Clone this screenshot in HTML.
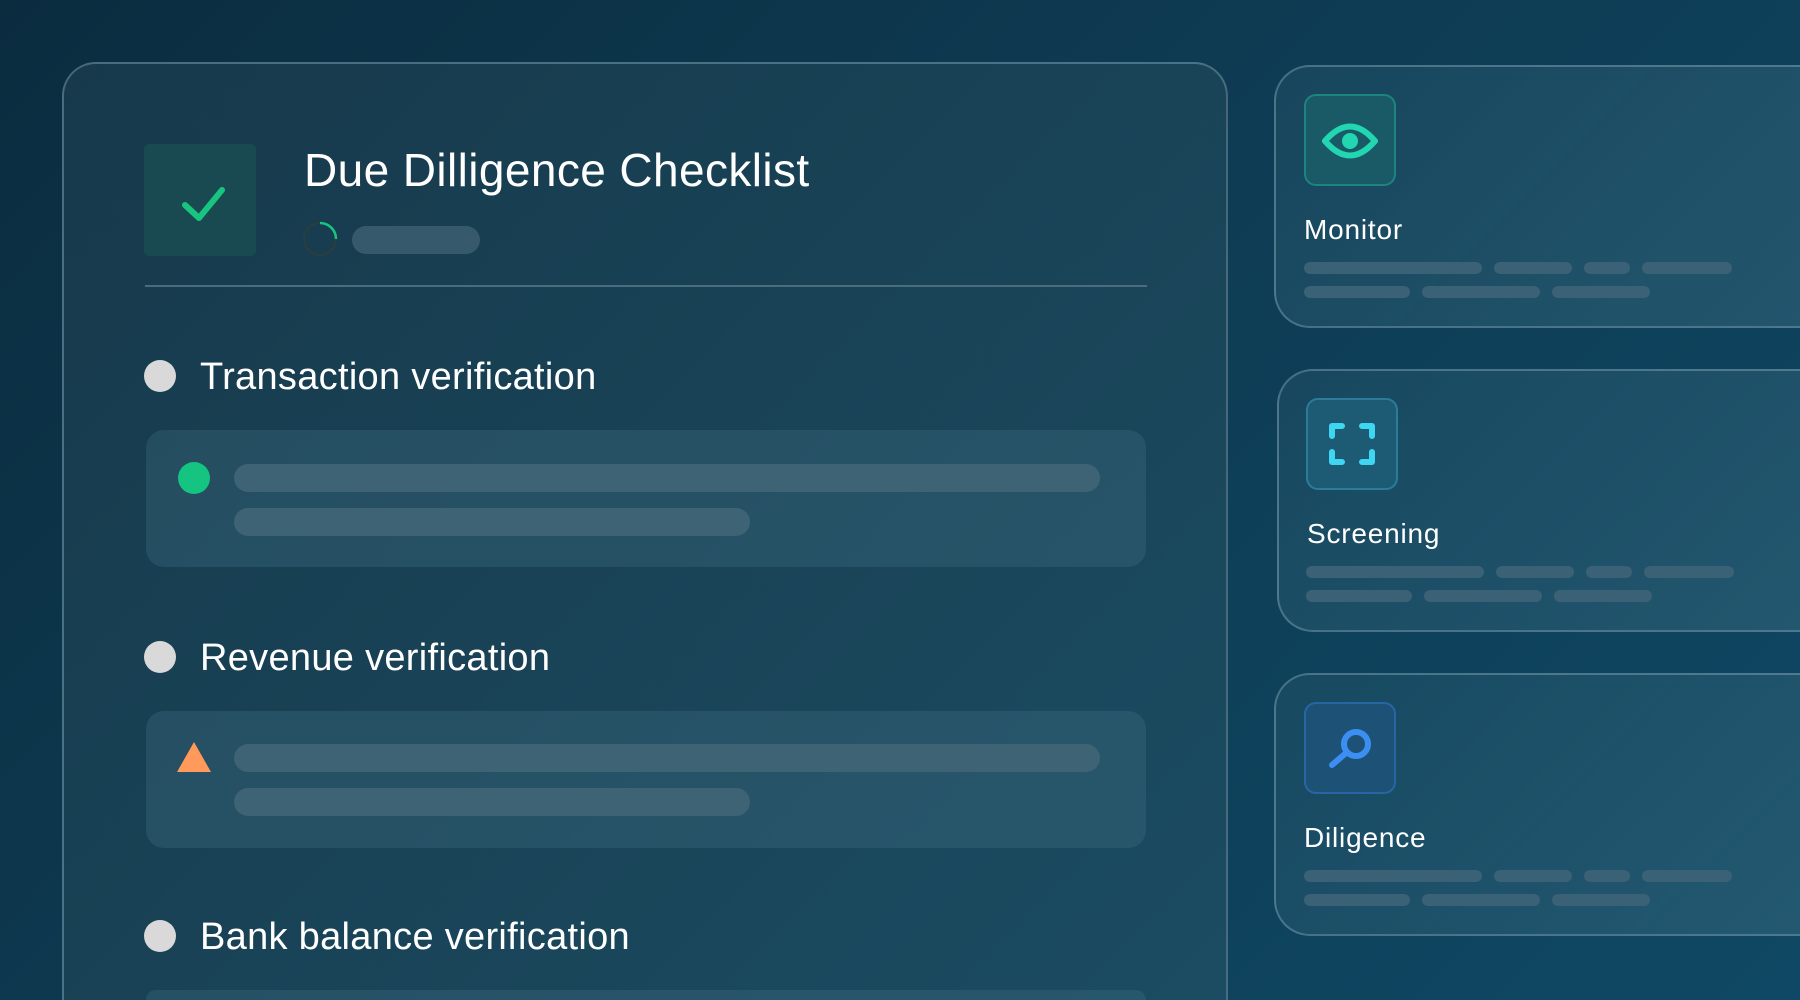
<!DOCTYPE html>
<html><head><meta charset="utf-8"><style>
*{margin:0;padding:0;box-sizing:border-box}
html,body{width:1800px;height:1000px;overflow:hidden}
body{font-family:"Liberation Sans",sans-serif}
#w{position:relative;width:1800px;height:1000px;overflow:hidden;background:linear-gradient(135deg,#0b2c3f 0%,#0e3c54 50%,#0f4864 100%)}
.a{position:absolute}
.card{background:linear-gradient(135deg,rgba(40,90,110,0.35),rgba(60,110,130,0.45));border:2px solid rgba(160,190,205,0.35)}
.bar{position:absolute;background:#3e6375;border-radius:14px}
.sb{position:absolute;background:#3a6176;border-radius:6px;height:12px}
.bul{position:absolute;width:32px;height:32px;border-radius:50%;background:#d9d9d9}
.lbl{position:absolute;color:#fff;font-size:38px;letter-spacing:0.3px;line-height:1}
.box{position:absolute;left:146px;width:1000px;height:137px;border-radius:18px;background:rgba(70,115,135,0.3)}
.ib{position:absolute;width:92px;height:92px;border-radius:12px}
.t{position:absolute;color:#fff;font-size:28px;line-height:1;letter-spacing:0.8px}
</style></head><body><div id="w">
<div class="a card" style="left:62px;top:62px;width:1166px;height:938px;border-bottom:none;border-radius:34px 34px 0 0;background:linear-gradient(135deg,#17394b,#1b4c62)"></div>
<div class="a" style="left:144px;top:144px;width:112px;height:112px;border-radius:6px;background:#1a4a51"></div>
<svg class="a" style="left:144px;top:144px" width="112" height="112"><path d="M41 61 L55 74 L78 46" fill="none" stroke="#18c47f" stroke-width="6" stroke-linecap="round" stroke-linejoin="round"/></svg>
<div class="a" style="left:304px;top:147px;color:#fff;font-size:46px;line-height:1;letter-spacing:0.4px">Due Dilligence Checklist</div>
<svg class="a" style="left:302px;top:221px" width="36" height="36"><circle cx="18" cy="18" r="16" fill="none" stroke="#2a3f3c" stroke-width="2"/><path d="M18 2 A16 16 0 0 1 34 18" fill="none" stroke="#18c47f" stroke-width="2.5"/></svg>
<div class="bar" style="left:352px;top:226px;width:128px;height:28px;background:#365a6c"></div>
<div class="a" style="left:145px;top:285px;width:1002px;height:2px;background:#4a6d7d"></div>

<div class="bul" style="left:144px;top:360px"></div>
<div class="lbl" style="left:200px;top:358px">Transaction verification</div>
<div class="box" style="top:430px"></div>
<div class="a" style="left:178px;top:462px;width:32px;height:32px;border-radius:50%;background:#14c480"></div>
<div class="bar" style="left:234px;top:464px;width:866px;height:28px"></div>
<div class="bar" style="left:234px;top:508px;width:516px;height:28px"></div>

<div class="bul" style="left:144px;top:641px"></div>
<div class="lbl" style="left:200px;top:639px">Revenue verification</div>
<div class="box" style="top:711px"></div>
<svg class="a" style="left:176px;top:741px" width="36" height="32"><polygon points="18,1 35,31 1,31" fill="#ff9a5a"/></svg>
<div class="bar" style="left:234px;top:744px;width:866px;height:28px"></div>
<div class="bar" style="left:234px;top:788px;width:516px;height:28px"></div>

<div class="bul" style="left:144px;top:920px"></div>
<div class="lbl" style="left:200px;top:918px">Bank balance verification</div>
<div class="box" style="top:990px;height:10px;border-radius:18px 18px 0 0"></div>

<div class="a card" style="left:1274px;top:65px;width:526px;height:263px;border-right:none;border-radius:36px 0 0 36px"></div>
<div class="a card" style="left:1277px;top:369px;width:523px;height:263px;border-right:none;border-radius:36px 0 0 36px"></div>
<div class="a card" style="left:1274px;top:673px;width:526px;height:263px;border-right:none;border-radius:36px 0 0 36px"></div>

<div class="ib" style="left:1304px;top:94px;background:#1a5a66;border:2px solid #1d8480"></div>
<svg class="a" style="left:1304px;top:94px" width="92" height="92"><path d="M21 47 Q46 18 71 47 Q46 76 21 47 Z" fill="none" stroke="#22d6b2" stroke-width="6" stroke-linejoin="round"/><circle cx="46" cy="47" r="8" fill="#22d6b2"/></svg>
<div class="t" style="left:1304px;top:216px">Monitor</div>

<div class="ib" style="left:1306px;top:398px;background:#1d5a74;border:2px solid #2a7c98"></div>
<svg class="a" style="left:1306px;top:398px" width="92" height="92" fill="none" stroke="#3fd6f2" stroke-width="6" stroke-linecap="round" stroke-linejoin="round"><path d="M26 38 V28 H36"/><path d="M56 28 H66 V38"/><path d="M26 54 V64 H36"/><path d="M56 64 H66 V54"/></svg>
<div class="t" style="left:1307px;top:520px">Screening</div>

<div class="ib" style="left:1304px;top:702px;background:#1d5276;border:2px solid #2766a4"></div>
<svg class="a" style="left:1304px;top:702px" width="92" height="92" fill="none" stroke="#3b8ff2" stroke-width="6" stroke-linecap="round"><circle cx="52" cy="42" r="12"/><path d="M42 51 L28 63"/></svg>
<div class="t" style="left:1304px;top:824px">Diligence</div>

<div class="sb" style="left:1304px;top:262px;width:178px"></div><div class="sb" style="left:1494px;top:262px;width:78px"></div><div class="sb" style="left:1584px;top:262px;width:46px"></div><div class="sb" style="left:1642px;top:262px;width:90px"></div>
<div class="sb" style="left:1304px;top:286px;width:106px"></div><div class="sb" style="left:1422px;top:286px;width:118px"></div><div class="sb" style="left:1552px;top:286px;width:98px"></div>
<div class="sb" style="left:1306px;top:566px;width:178px"></div><div class="sb" style="left:1496px;top:566px;width:78px"></div><div class="sb" style="left:1586px;top:566px;width:46px"></div><div class="sb" style="left:1644px;top:566px;width:90px"></div>
<div class="sb" style="left:1306px;top:590px;width:106px"></div><div class="sb" style="left:1424px;top:590px;width:118px"></div><div class="sb" style="left:1554px;top:590px;width:98px"></div>
<div class="sb" style="left:1304px;top:870px;width:178px"></div><div class="sb" style="left:1494px;top:870px;width:78px"></div><div class="sb" style="left:1584px;top:870px;width:46px"></div><div class="sb" style="left:1642px;top:870px;width:90px"></div>
<div class="sb" style="left:1304px;top:894px;width:106px"></div><div class="sb" style="left:1422px;top:894px;width:118px"></div><div class="sb" style="left:1552px;top:894px;width:98px"></div>
</div></body></html>
